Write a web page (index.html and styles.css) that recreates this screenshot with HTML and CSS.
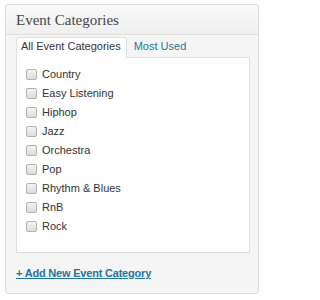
FILE: index.html
```html
<!DOCTYPE html>
<html>
<head>
<meta charset="utf-8">
<link rel="stylesheet" href="styles.css">
</head>
<body>
<div class="postbox">
  <h3 class="hndle">Event Categories</h3>
  <div class="inside">
    <ul class="tabs">
      <li class="tab active">All Event Categories</li>
      <li class="tab"><a href="#">Most Used</a></li>
    </ul>
    <div class="panel">
      <ul class="checklist">
        <li><label><input type="checkbox"> Country</label></li>
        <li><label><input type="checkbox"> Easy Listening</label></li>
        <li><label><input type="checkbox"> Hiphop</label></li>
        <li><label><input type="checkbox"> Jazz</label></li>
        <li><label><input type="checkbox"> Orchestra</label></li>
        <li><label><input type="checkbox"> Pop</label></li>
        <li><label><input type="checkbox"> Rhythm &amp; Blues</label></li>
        <li><label><input type="checkbox"> RnB</label></li>
        <li><label><input type="checkbox"> Rock</label></li>
      </ul>
    </div>
    <a class="add-link" href="#">+ Add New Event Category</a>
  </div>
</div>
</body>
</html>
```
FILE: styles.css
```css
html, body {
  margin: 0;
  padding: 0;
  background: #ffffff;
}
body {
  font-family: "Liberation Sans", Arial, sans-serif;
  font-size: 11px;
  color: #333333;
}
.postbox {
  margin: 4px 5px 0 5px;
  width: 252px;
  border: 1px solid #dfdfdf;
  border-radius: 3px;
  background: #f5f5f5;
}
.hndle {
  margin: 0;
  padding: 6px 10px 4px 10px;
  font-family: "Liberation Serif", Georgia, serif;
  font-weight: normal;
  font-size: 15px;
  line-height: 19px;
  color: #464646;
  background: linear-gradient(#f9f9f9, #efefef);
  border-bottom: 1px solid #dfdfdf;
  border-radius: 3px 3px 0 0;
}
.inside {
  padding: 2px 8px 13px 10px;
}
.tabs {
  list-style: none;
  margin: 0;
  padding: 0;
  display: flex;
  gap: 2px;
}
.tab {
  padding: 2px 5px 5px 4px;
  line-height: 13px;
  border: 1px solid transparent;
  border-bottom: none;
  border-radius: 3px 3px 0 0;
  margin-bottom: -1px;
  position: relative;
  z-index: 1;
}
.tab.active {
  background: #ffffff;
  border-color: #dfdfdf;
  color: #333333;
}
.tab a {
  color: #21759b;
  text-decoration: none;
}
.panel {
  background: #ffffff;
  border: 1px solid #dfdfdf;
  padding: 7px 9px 16px 9px;
}
.checklist {
  list-style: none;
  margin: 0;
  padding: 0;
}
.checklist li {
  height: 19px;
  line-height: 19px;
}
.checklist label {
  display: flex;
  align-items: center;
  gap: 5px;
  height: 19px;
}
.checklist input {
  appearance: none;
  -webkit-appearance: none;
  margin: 0;
  width: 11px;
  height: 11px;
  border: 1px solid #b2b2b2;
  border-radius: 2px;
  background: linear-gradient(#f4f4f4, #dcdcdc);
  box-sizing: border-box;
  flex: none;
}
.add-link {
  display: inline-block;
  margin-top: 14px;
  font-weight: bold;
  font-size: 11px;
  line-height: 13px;
  letter-spacing: -0.2px;
  color: #21759b;
  text-decoration: underline;
}
```
